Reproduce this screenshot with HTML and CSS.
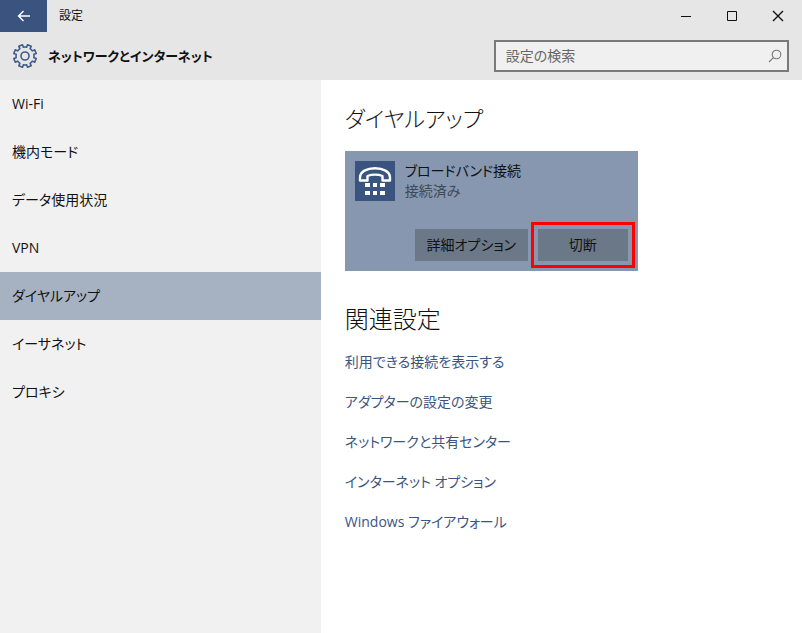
FILE: index.html
```html
<!DOCTYPE html>
<html lang="ja">
<head>
  <meta charset="UTF-8" />
  <meta name="viewport" content="width=device-width, initial-scale=1.0"/>
  <title>設定</title>
  <link rel="stylesheet" href="styles.css">
</head>
<body>
  <header class="top">
    <div class="titlebar">
      <button class="back" aria-label="戻る">
        <svg width="14" height="12" viewBox="0 0 14 12" fill="none" stroke="currentColor" stroke-width="1.4"><path d="M13 6H1.5M6.5 1L1.5 6l5 5"/></svg>
      </button>
      <span class="window-title">設定</span>
      <div class="window-controls">
        <button aria-label="最小化">
          <svg width="12" height="12" viewBox="0 0 12 12" fill="none" stroke="currentColor"><path d="M1 6.5h10"/></svg>
        </button>
        <button aria-label="最大化">
          <svg width="12" height="12" viewBox="0 0 12 12" fill="none" stroke="currentColor"><path d="M1.5 1.5h9v9h-9z"/></svg>
        </button>
        <button aria-label="閉じる">
          <svg width="12" height="12" viewBox="0 0 12 12" fill="none" stroke="currentColor" stroke-width="1.4"><path d="M1 1l10 10M11 1L1 11"/></svg>
        </button>
      </div>
    </div>
    <div class="heading-bar">
      <svg class="gear" width="26" height="26" viewBox="-13 -13 26 26" fill="none" stroke="currentColor" stroke-width="1.6" stroke-linejoin="round">
        <path d="M1.64-8.85L2.49-11.23 6.18-9.7 5.1-7.42Q6.4-6.4 7.42-5.1L9.7-6.18 11.23-2.49 8.85-1.64Q9.1 0 8.85 1.64L11.23 2.49 9.7 6.18 7.42 5.1Q6.4 6.4 5.1 7.42L6.18 9.7 2.49 11.23 1.64 8.85Q0 9.1-1.64 8.85L-2.49 11.23-6.18 9.7-5.1 7.42Q-6.4 6.4-7.42 5.1L-9.7 6.18-11.23 2.49-8.85 1.64Q-9.1 0-8.85-1.64L-11.23-2.49-9.7-6.18-7.42-5.1Q-6.4-6.4-5.1-7.42L-6.18-9.7-2.49-11.23-1.64-8.85Q0-9.1 1.64-8.85z"/>
        <circle r="4"/>
      </svg>
      <h1>ネットワークとインターネット</h1>
      <form class="search">
        <input type="text" placeholder="設定の検索" aria-label="設定の検索">
        <button type="button" aria-label="検索">
          <svg width="14" height="14" viewBox="0 0 14 14" fill="none" stroke="currentColor" stroke-width="1.1"><circle cx="8.5" cy="5.5" r="4.3"/><path d="M5.4 8.6L1 13"/></svg>
        </button>
      </form>
    </div>
  </header>

  <div class="columns">
    <nav class="sidebar">
      <a href="#">Wi-Fi</a>
      <a href="#">機内モード</a>
      <a href="#">データ使用状況</a>
      <a href="#">VPN</a>
      <a href="#" class="active" aria-current="page">ダイヤルアップ</a>
      <a href="#">イーサネット</a>
      <a href="#">プロキシ</a>
    </nav>

    <main class="content">
      <h2 class="page-title">ダイヤルアップ</h2>
      <section class="connection">
        <div class="connection-info">
          <div class="phone">
            <svg width="40" height="40" viewBox="0 0 40 40" fill="none">
              <path d="M5 19.500v-3C5 10.500 12 7.200 20 7.200s15 3.300 15 9.300v3h-7.500v-4.500c-4-1.800-11-1.800-15 0v4.500z" stroke="#fff" stroke-width="2.400" stroke-linejoin="round"/>
              <path d="M10 22h5v4h-5zM18 22h4v4h-4zM25 22h5v4h-5zM10 30h5v4h-5zM18 30h4v4h-4zM25 30h5v4h-5z" fill="#fff"/>
            </svg>
          </div>
          <div>
            <div class="name">ブロードバンド接続</div>
            <div class="status">接続済み</div>
          </div>
        </div>
        <div class="actions">
          <button class="details">詳細オプション</button>
          <button class="disconnect">切断</button>
        </div>
      </section>

      <h2>関連設定</h2>
      <ul class="links">
        <li><a href="#">利用できる接続を表示する</a></li>
        <li><a href="#">アダプターの設定の変更</a></li>
        <li><a href="#">ネットワークと共有センター</a></li>
        <li><a href="#">インターネット オプション</a></li>
        <li><a href="#">Windows ファイアウォール</a></li>
      </ul>
    </main>
  </div>
</body>
</html>
```
FILE: styles.css
```css
* {
  box-sizing: border-box;
}
body {
  margin: 0;
  min-height: 100vh;
  display: flex;
  flex-direction: column;
  font-family: "Open Sans", "Noto Sans CJK JP", sans-serif;
  font-feature-settings: "palt";
  font-size: 14px;
  line-height: 20px;
  background: #fff;
  color: #111;
}
button, input {
  font: inherit;
  font-feature-settings: inherit;
  color: inherit;
  border: none;
  border-radius: 0;
  padding: 0;
}
a {
  text-decoration: none;
}

/* title bar */
.top {
  background: #e6e6e6;
}
.titlebar {
  display: flex;
  align-items: center;
  height: 32px;
  padding-right: 1px;
}
.back {
  width: 47px;
  height: 32px;
  background: #3a547f;
  color: #fff;
}
.window-title {
  margin-left: 12px;
  font-size: 12px;
}
.window-controls {
  display: flex;
  margin-left: auto;
}
.window-controls button {
  width: 46px;
  height: 32px;
  background: none;
}
button svg {
  display: block;
  margin: 0 auto;
}

.heading-bar {
  display: flex;
  align-items: center;
  height: 48px;
  padding: 0 13px 0 12px;
}
.gear {
  color: #3f5c8a;
}
h1 {
  margin: 0 0 0 10px;
  font-size: 13px;
  font-weight: 700;
}
.search {
  display: flex;
  align-items: center;
  width: 38%;
  height: 32px;
  margin-left: auto;
  border: 2px solid #7a7a7a;
  background: #f0f0f0;
}
.search input {
  flex: 1;
  min-width: 0;
  padding-left: 10px;
  background: none;
}
.search input::placeholder {
  color: #666;
  opacity: 1;
}
.search button {
  width: 24px;
  background: none;
  color: #777;
}

.columns {
  display: flex;
  flex: 1;
}
.sidebar {
  width: 40%;
  background: #f1f1f1;
}
.sidebar a {
  display: block;
  padding: 14px 12px;
  color: #111;
}
.sidebar .active {
  background: #a6b1c2;
}

.content {
  flex: 1;
  padding: 22px 24px;
}
h2 {
  margin: 0;
  font-size: 24px;
  font-weight: 300;
  line-height: 32px;
}
.page-title {
  font-size: 22px;
}
.connection {
  max-width: 293px;
  margin: 17px 0 32px;
  padding: 10px;
  background: #8697af;
}
.connection-info {
  display: flex;
  gap: 10px;
}
.phone {
  height: 40px;
  background: #38547f;
}
.status {
  color: #3f4a59;
}
.actions {
  display: flex;
  justify-content: flex-end;
  gap: 10px;
  margin-top: 28px;
}
.actions button {
  height: 32px;
  background: #6a7888;
}
.details {
  width: 113px;
}
.disconnect {
  position: relative;
  width: 90px;
}
/* red frame around the disconnect button */
.disconnect::after {
  content: "";
  position: absolute;
  inset: -7px;
  border: 3px solid #f00;
}

.links {
  margin: 17px 0 0;
  padding: 0;
  list-style: none;
}
.links li {
  margin-bottom: 20px;
}
.links a {
  color: #3a5580;
}
```
